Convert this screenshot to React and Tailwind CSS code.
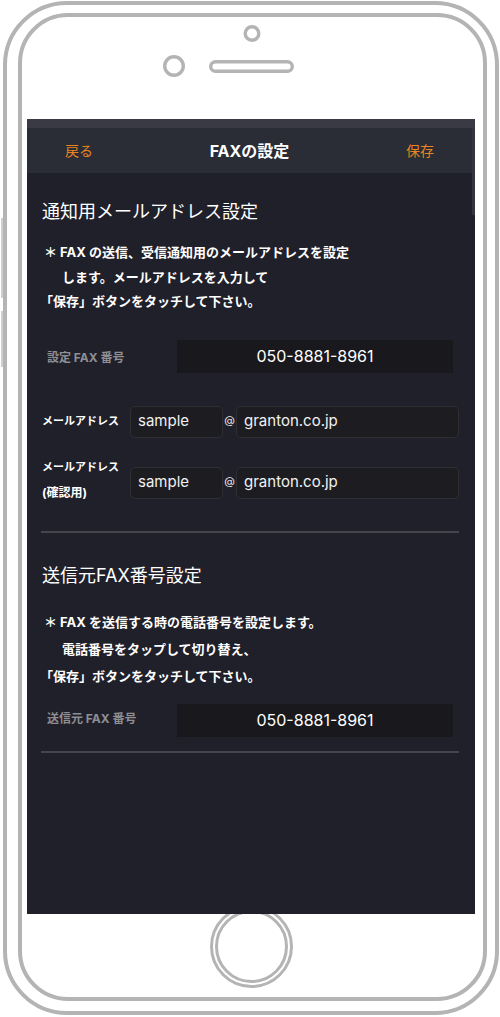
import React from "react";

const FONT = { fontFamily: 'Inter, "Noto Sans CJK JP", "Noto Sans", sans-serif' };

function TopHardware() {
  return (
    <svg width="461" height="102" viewBox="0 0 461 102" className="shrink-0">
      <circle cx="230" cy="16.5" r="6.8" fill="none" stroke="#b4b4b4" strokeWidth="3.4" />
      <circle cx="152" cy="49" r="9.3" fill="none" stroke="#b4b4b4" strokeWidth="3.4" />
      <rect x="188.7" y="44.7" width="81.6" height="9.6" rx="4.8" fill="none" stroke="#b4b4b4" strokeWidth="3.4" />
    </svg>
  );
}

function EmailBoxes() {
  return (
    <>
      <div className="w-[93px] h-[32px] shrink-0 rounded-[5px] border border-[#2e2e35] bg-[#1c1c21] pl-[7px] flex items-center text-[15px] text-[#f2f2f2]">
        sample
      </div>
      <div className="w-[13px] shrink-0 text-center text-[11px] text-[#e6e6e6] -mt-[3px]">@</div>
      <div className="w-[223px] h-[32px] shrink-0 rounded-[5px] border border-[#2e2e35] bg-[#1c1c21] pl-[7px] flex items-center text-[15px] text-[#f2f2f2]">
        granton.co.jp
      </div>
    </>
  );
}

export default function App() {
  return (
    <div className="w-[500px] h-[1017px] bg-white overflow-hidden" style={FONT}>
      <div className="relative ml-[3px] mt-[1px] w-[496px] h-[1014px] border-[4px] border-[#b4b4b4] rounded-[64px] pt-[8px] pl-[11px]">
        {/* side buttons */}
        <div className="absolute -left-[6px] top-[213px] w-[2px] h-[80px] bg-[#cfcfcf]" />
        <div className="absolute -left-[6px] top-[306px] w-[2px] h-[56px] bg-[#cfcfcf]" />

        <div className="w-[469px] h-[988px] border-[4px] border-[#b4b4b4] rounded-[50px] flex flex-col">
          <TopHardware />

          {/* Screen */}
          <div className="ml-[5px] w-[448px] h-[795px] shrink-0 relative z-10 bg-[#20202a] flex flex-col">
            <div className="h-[9px] bg-[#393a44]" />
            <div className="flex flex-1">
              <div className="w-[445px] flex flex-col">
                {/* Nav bar */}
                <div className="h-[45px] bg-[#2a2c36] grid grid-cols-3 items-center px-[38px]">
                  <span className="justify-self-start text-[14px] text-[#e8851f]">戻る</span>
                  <span className="justify-self-center text-[16px] font-bold text-white whitespace-nowrap">FAXの設定</span>
                  <span className="justify-self-end text-[14px] text-[#e8851f]">保存</span>
                </div>

                {/* Section 1 */}
                <div className="pt-[26px] pl-[15px] text-[18px] leading-[26px] text-white font-normal">
                  通知用メールアドレス設定
                </div>
                <div className="mt-[15px] pl-[13px] text-[13px] leading-[24.5px] font-bold text-white whitespace-nowrap">
                  <div className="pl-[4px]">＊ FAX の送信、受信通知用のメールアドレスを設定</div>
                  <div className="pl-[22px]">します。メールアドレスを入力して</div>
                  <div>「保存」ボタンをタッチして下さい。</div>
                </div>

                <div className="mt-[26px] flex items-center">
                  <div className="w-[150px] pl-[20px] text-[12px] font-bold text-[#8e8e93] mt-[3px]">設定 FAX 番号</div>
                  <div className="w-[276px] h-[33px] bg-[#19191d] flex items-center justify-center text-[16px] text-white">
                    050-8881-8961
                  </div>
                </div>

                <div className="mt-[33px] flex items-center h-[32px]">
                  <div className="w-[103px] pl-[15px] text-[11px] font-bold text-white">メールアドレス</div>
                  <EmailBoxes />
                </div>

                <div className="mt-[17px] flex items-start">
                  <div className="w-[103px] pl-[15px] text-[11px] font-bold text-white leading-[25px]">
                    <div>メールアドレス</div>
                    <div className="text-[12px]">(確認用)</div>
                  </div>
                  <div className="mt-[12px] flex items-center">
                    <EmailBoxes />
                  </div>
                </div>

                <div className="mt-[26px] ml-[14px] w-[418px] h-[2px] bg-[#45464d]" />

                {/* Section 2 */}
                <div className="mt-[30px] pl-[15px] text-[18px] leading-[26px] text-white font-normal">
                  送信元FAX番号設定
                </div>
                <div className="mt-[20px] pl-[13px] text-[13px] leading-[27px] font-bold text-white whitespace-nowrap">
                  <div className="pl-[4px]">＊ FAX を送信する時の電話番号を設定します。</div>
                  <div className="pl-[22px]">電話番号をタップして切り替え、</div>
                  <div>「保存」ボタンをタッチして下さい。</div>
                </div>

                <div className="mt-[14px] flex items-center">
                  <div className="w-[150px] pl-[20px] text-[12px] font-bold text-[#8e8e93] -mt-[3px]">送信元 FAX 番号</div>
                  <div className="w-[276px] h-[33px] bg-[#19191d] flex items-center justify-center text-[16px] text-white">
                    050-8881-8961
                  </div>
                </div>

                <div className="mt-[14px] ml-[14px] w-[418px] h-[2px] bg-[#45464d]" />
              </div>

              {/* Scrollbar */}
              <div className="w-[3px]">
                <div className="h-[87px] bg-[#33343d]" />
              </div>
            </div>
          </div>

          {/* Home button */}
          <div className="ml-[188px] -mt-[9px] w-[83px] h-[83px] rounded-full border-[3px] border-[#b4b4b4] p-[2px]">
            <div className="w-full h-full rounded-full border-[3px] border-[#b4b4b4]" />
          </div>
        </div>
      </div>
    </div>
  );
}
